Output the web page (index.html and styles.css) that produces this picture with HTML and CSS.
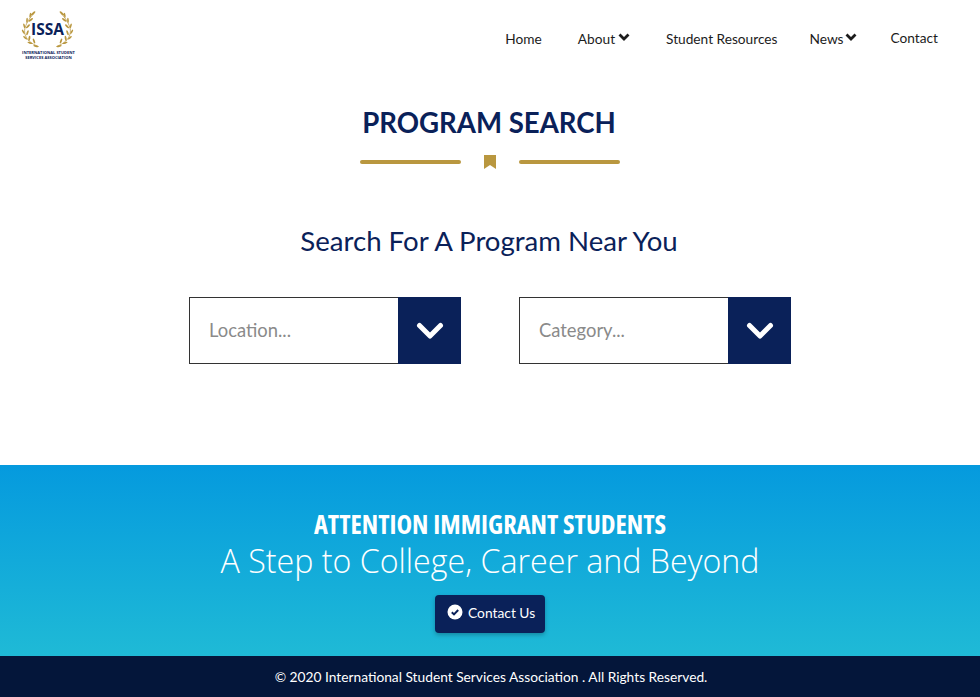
FILE: index.html
```html
<!DOCTYPE html>
<html>
<head>
  <meta charset="UTF-8" />
  <title>International Student Services Association – Program Search</title>
  <link rel="stylesheet" href="styles.css">
</head>
<body>

<header class="site-header">
  <a class="logo" href="#">
    <svg width="56" height="62" viewBox="0 0 56 62">
      <!-- laurel, right side is the left one mirrored -->
      <g id="laurel" fill="#b9973f" transform="translate(1.9 2.4) scale(0.93 0.92)">
        <path d="M13 12 C7 18 2 27 3 33 C4 40 10 45 18 48" fill="none" stroke="#b9973f" stroke-width="0.8" />
        <ellipse cx="12" cy="12" rx="3.2" ry="1" transform="rotate(-40 12 12)" />
        <ellipse cx="9" cy="14" rx="2.7" ry="0.9" transform="rotate(-80 9 14)" />
        <ellipse cx="9.5" cy="19" rx="2.9" ry="1" transform="rotate(-35 9.5 19)" />
        <ellipse cx="5.5" cy="19.5" rx="2.7" ry="0.9" transform="rotate(-85 5.5 19.5)" />
        <ellipse cx="6.5" cy="26" rx="2.9" ry="1" transform="rotate(-45 6.5 26)" />
        <ellipse cx="2.5" cy="25.5" rx="2.7" ry="0.9" transform="rotate(75 2.5 25.5)" />
        <ellipse cx="6" cy="33" rx="2.9" ry="1" transform="rotate(-70 6 33)" />
        <ellipse cx="1.5" cy="32" rx="2.7" ry="0.9" transform="rotate(60 1.5 32)" />
        <ellipse cx="8" cy="39" rx="2.9" ry="1" transform="rotate(-80 8 39)" />
        <ellipse cx="3.5" cy="38.5" rx="2.7" ry="0.9" transform="rotate(40 3.5 38.5)" />
        <ellipse cx="13" cy="42" rx="2.9" ry="1" transform="rotate(70 13 42)" />
        <ellipse cx="8.5" cy="44" rx="2.7" ry="0.9" transform="rotate(20 8.5 44)" />
        <ellipse cx="15" cy="47.5" rx="2.9" ry="0.9" transform="rotate(15 15 47.5)" />
      </g>
      <use href="#laurel" transform="translate(55 0) scale(-1 1)" />
      <text class="logo-issa" x="27.5" y="35" text-anchor="middle">ISSA</text>
      <text class="logo-small" x="28.5" y="54" text-anchor="middle">INTERNATIONAL STUDENT</text>
      <text class="logo-small" x="28.5" y="59" text-anchor="middle">SERVICES ASSOCIATION</text>
    </svg>
  </a>

  <nav class="main-nav">
    <a href="#">Home</a>
    <a href="#">About<svg class="caret about-caret" width="12" height="8" viewBox="0 0 12 8"><path d="M1.5 1.5 L6 6 L10.5 1.5" /></svg></a>
    <a href="#">Student Resources</a>
    <a href="#" class="news-link">News<svg class="caret" width="12" height="8" viewBox="0 0 12 8"><path d="M1.5 1.5 L6 6 L10.5 1.5" /></svg></a>
    <a href="#" class="contact-link">Contact</a>
  </nav>
</header>

<main class="search-section">
  <h1>PROGRAM SEARCH</h1>
  <div class="divider">
    <span class="divider-line"></span>
    <svg width="12" height="14" viewBox="0 0 12 14"><path d="M0 0 H12 V14 L6 10 L0 14 Z" fill="#b9973f" /></svg>
    <span class="divider-line"></span>
  </div>

  <h2>Search For A Program Near You</h2>

  <div class="select-row">
    <div class="select-box">
      <span class="select-label">Location...</span>
      <span class="select-btn">
        <svg width="28" height="18" viewBox="0 0 28 18"><path d="M3.5 3.5 L14 14 L24.5 3.5" /></svg>
      </span>
    </div>
    <div class="select-box">
      <span class="select-label">Category...</span>
      <span class="select-btn">
        <svg width="28" height="18" viewBox="0 0 28 18"><path d="M3.5 3.5 L14 14 L24.5 3.5" /></svg>
      </span>
    </div>
  </div>
</main>

<section class="banner">
  <h3>ATTENTION IMMIGRANT STUDENTS</h3>
  <p>A Step to College, Career and Beyond</p>
  <a class="contact-btn" href="#">
    <svg width="16" height="16" viewBox="0 0 16 16">
      <circle cx="8" cy="8" r="7.5" fill="#fff" />
      <path d="M4.8 8.2 L7 10.4 L11.2 6" fill="none" stroke="#0a2159" stroke-width="2" />
    </svg>
    Contact Us
  </a>
</section>

<footer class="site-footer">© 2020 International Student Services Association . All Rights Reserved.</footer>

</body>
</html>
```

FILE: styles.css
```css
body {
  margin: 0;
  padding: 0;
  background-color: #ffffff;
  font-family: 'Lato', sans-serif;
  color: #0a2159;
}
.site-header {
  height: 80px;
  display: flex;
  justify-content: space-between;
  padding: 0 42px 0 20px;
}
.logo {
  display: block;
  height: 62px;
}
.logo-issa {
  font-family: 'Open Sans', sans-serif;
  font-size: 15.5px;
  font-weight: 700;
  fill: #0a2159;
}
.logo-small {
  font-family: 'Open Sans', sans-serif;
  font-size: 4.05px;
  font-weight: 700;
  fill: #0a2159;
}
.main-nav {
  display: flex;
  align-items: flex-start;
  padding-top: 30px;
  font-size: 13.7px;
  line-height: 18px;
}
.main-nav a {
  color: #1c1c1c;
  text-decoration: none;
  margin-left: 36px;
  white-space: nowrap;
}
.main-nav .news-link {
  margin-left: 32px;
}
.main-nav .contact-link {
  margin-left: 34px;
  margin-top: -1px;
}
.caret {
  vertical-align: 3px;
  margin-left: 1px;
}
.about-caret {
  margin-left: 3px;
}
.caret path {
  fill: none;
  stroke: #1c1c1c;
  stroke-width: 2.8;
}
.search-section {
  height: 385px;
  text-align: center;
}
h1 {
  margin: 0;
  padding: 25px 2px 0 0;
  font-size: 27.6px;
  line-height: 36px;
  font-weight: 700;
}
.divider {
  display: flex;
  justify-content: center;
  align-items: center;
  gap: 23px;
  margin-top: 14px;
  height: 14px;
}
.divider-line {
  width: 101px;
  height: 4px;
  border-radius: 2px;
  background-color: #b9973f;
}
h2 {
  margin: 0;
  padding: 54px 2px 0 0;
  font-size: 27.6px;
  line-height: 36px;
  font-weight: 400;
}
.select-row {
  display: flex;
  justify-content: center;
  gap: 58px;
  margin-top: 38px;
}
.select-box {
  width: 272px;
  height: 67px;
  box-sizing: border-box;
  display: flex;
  justify-content: space-between;
  border: 1px solid #333333;
  border-right: none;
}
.select-label {
  padding-left: 19px;
  font-size: 18.4px;
  line-height: 64px;
  color: #8a8a8a;
}
.select-btn {
  width: 63px;
  margin: -1px 0;
  display: flex;
  align-items: center;
  justify-content: center;
  background-color: #0a2159;
}
.select-btn path {
  fill: none;
  stroke: #ffffff;
  stroke-width: 5;
  stroke-linecap: round;
  stroke-linejoin: round;
}
.banner {
  height: 191px;
  box-sizing: border-box;
  padding-top: 42px;
  text-align: center;
  color: #ffffff;
  background: linear-gradient(to bottom, #059ade, #1fbad6);
}
.banner h3 {
  margin: 0;
  font-family: 'Open Sans', sans-serif;
  font-stretch: 75%;
  font-size: 26.4px;
  line-height: 34px;
  font-weight: 700;
}
.banner p {
  margin: 1px 0 0;
  font-family: 'Open Sans', sans-serif;
  font-size: 32.2px;
  line-height: 38px;
  font-weight: 300;
}
.contact-btn {
  display: inline-flex;
  align-items: center;
  gap: 5px;
  width: 110px;
  height: 38px;
  box-sizing: border-box;
  margin-top: 15px;
  padding-left: 12px;
  padding-bottom: 4px;
  font-size: 13.8px;
  color: #ffffff;
  text-decoration: none;
  background-color: #0a2159;
  border-radius: 4px;
  box-shadow: 0 2px 4px rgba(0, 0, 0, 0.25);
}
.site-footer {
  height: 41px;
  line-height: 41px;
  padding-left: 2px;
  text-align: center;
  font-size: 13.75px;
  color: #ffffff;
  background-color: #04163a;
}
```
